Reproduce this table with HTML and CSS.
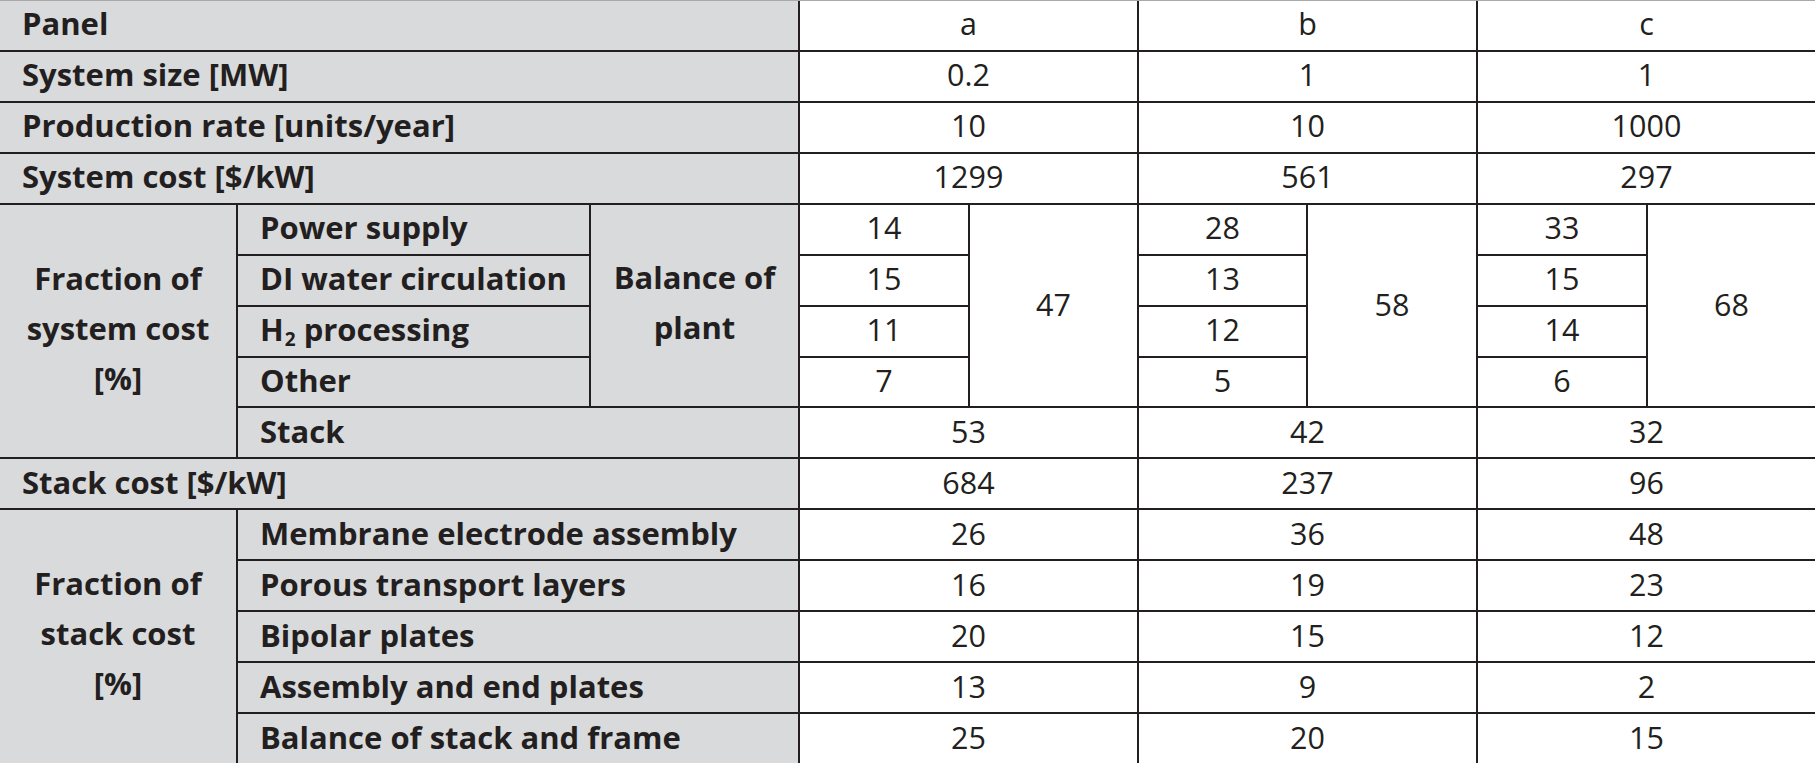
FILE: index.html
```html
<!DOCTYPE html>
<html lang="en">
<head>
<meta charset="utf-8">
<title>Electrolyser cost breakdown</title>
<link rel="stylesheet" href="styles.css">
</head>
<body>
<div class="sheet">
  <div class="lab s3">Panel</div>
  <div class="val s2">a</div>
  <div class="val s2">b</div>
  <div class="val s2">c</div>

  <div class="lab s3">System size [MW]</div>
  <div class="val s2">0.2</div>
  <div class="val s2">1</div>
  <div class="val s2">1</div>

  <div class="lab s3">Production rate [units/year]</div>
  <div class="val s2">10</div>
  <div class="val s2">10</div>
  <div class="val s2">1000</div>

  <div class="lab s3">System cost [$/kW]</div>
  <div class="val s2">1299</div>
  <div class="val s2">561</div>
  <div class="val s2">297</div>

  <div class="lab ctr r5">Fraction of<br>system cost<br>[%]</div>
  <div class="lab">Power supply</div>
  <div class="lab ctr r4">Balance of<br>plant</div>
  <div class="val">14</div>
  <div class="val r4">47</div>
  <div class="val">28</div>
  <div class="val r4">58</div>
  <div class="val">33</div>
  <div class="val r4">68</div>

  <div class="lab">DI water circulation</div>
  <div class="val">15</div>
  <div class="val">13</div>
  <div class="val">15</div>

  <div class="lab"><span>H<span class="sub">2</span> processing</span></div>
  <div class="val">11</div>
  <div class="val">12</div>
  <div class="val">14</div>

  <div class="lab">Other</div>
  <div class="val">7</div>
  <div class="val">5</div>
  <div class="val">6</div>

  <div class="lab s2">Stack</div>
  <div class="val s2">53</div>
  <div class="val s2">42</div>
  <div class="val s2">32</div>

  <div class="lab s3">Stack cost [$/kW]</div>
  <div class="val s2">684</div>
  <div class="val s2">237</div>
  <div class="val s2">96</div>

  <div class="lab ctr r5">Fraction of<br>stack cost<br>[%]</div>
  <div class="lab s2">Membrane electrode assembly</div>
  <div class="val s2">26</div>
  <div class="val s2">36</div>
  <div class="val s2">48</div>

  <div class="lab s2">Porous transport layers</div>
  <div class="val s2">16</div>
  <div class="val s2">19</div>
  <div class="val s2">23</div>

  <div class="lab s2">Bipolar plates</div>
  <div class="val s2">20</div>
  <div class="val s2">15</div>
  <div class="val s2">12</div>

  <div class="lab s2">Assembly and end plates</div>
  <div class="val s2">13</div>
  <div class="val s2">9</div>
  <div class="val s2">2</div>

  <div class="lab s2">Balance of stack and frame</div>
  <div class="val s2">25</div>
  <div class="val s2">20</div>
  <div class="val s2">15</div>
</div>
</body>
</html>
```

FILE: styles.css
```css
html, body {
  margin: 0;
  padding: 0;
  background: #ffffff;
}

.sheet {
  box-sizing: border-box;
  width: 1815px;
  height: 763px;
  border-top: 1px solid #a9a9a9;
  display: grid;
  grid-template-columns: 236px 351px 207px 168px 167px 167px 168px 168px 167px;
  grid-template-rows: repeat(15, 1fr);
  gap: 2px;
  background: #231f20;
  font-family: "Open Sans", "DejaVu Sans", sans-serif;
  color: #231f20;
  overflow: hidden;
}

.lab, .val {
  display: flex;
  align-items: center;
  box-sizing: border-box;
  padding-bottom: 4px;
  white-space: nowrap;
}

.lab {
  background: #d9dadc;
  font-weight: 700;
  font-size: 31px;
  padding-left: 22px;
}

.val {
  background: #ffffff;
  font-weight: 400;
  font-size: 30.5px;
  justify-content: center;
}

.ctr {
  justify-content: center;
  text-align: center;
  padding-left: 0;
  line-height: 50px;
  padding-bottom: 7px;
}

.s2 { grid-column: span 2; }
.s3 { grid-column: span 3; }
.r4 { grid-row: span 4; }
.r5 { grid-row: span 5; }

.sub {
  font-size: 19px;
  position: relative;
  top: 5px;
  margin-left: 1px;
}
```
